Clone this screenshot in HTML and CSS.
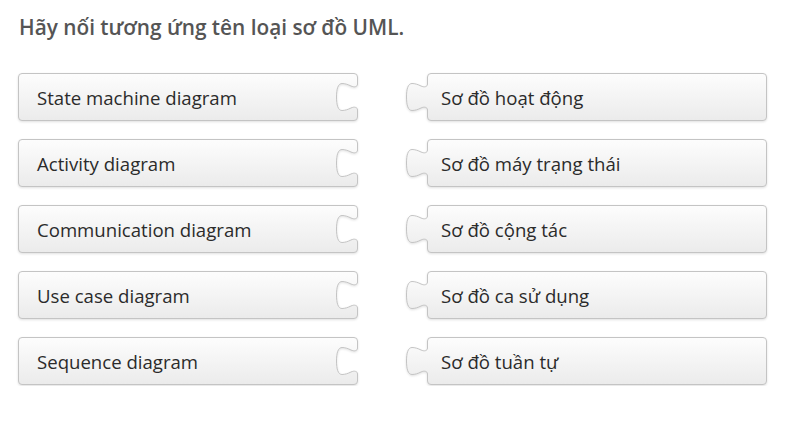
FILE: index.html
```html
<!DOCTYPE html>
<html lang="vi">
<head>
<meta charset="utf-8">
<title>Hãy nối tương ứng</title>
<link rel="stylesheet" href="styles.css">
</head>
<body>
<div class="page">
  <h1 class="question">Hãy nối tương ứng tên loại sơ đồ UML.</h1>
  <div class="board">
    <div class="col col-left">
      <div class="card card-left">
        <svg class="shape" viewBox="0 0 341 49" width="341" height="49"><use href="#sock"/></svg>
        <span class="label">State machine diagram</span>
      </div>
      <div class="card card-left">
        <svg class="shape" viewBox="0 0 341 49" width="341" height="49"><use href="#sock"/></svg>
        <span class="label">Activity diagram</span>
      </div>
      <div class="card card-left">
        <svg class="shape" viewBox="0 0 341 49" width="341" height="49"><use href="#sock"/></svg>
        <span class="label">Communication diagram</span>
      </div>
      <div class="card card-left">
        <svg class="shape" viewBox="0 0 341 49" width="341" height="49"><use href="#sock"/></svg>
        <span class="label">Use case diagram</span>
      </div>
      <div class="card card-left">
        <svg class="shape" viewBox="0 0 341 49" width="341" height="49"><use href="#sock"/></svg>
        <span class="label">Sequence diagram</span>
      </div>
    </div>
    <div class="col col-right">
      <div class="card card-right">
        <svg class="shape" viewBox="0 0 362 49" width="362" height="49"><use href="#tab"/></svg>
        <span class="label">Sơ đồ hoạt động</span>
      </div>
      <div class="card card-right">
        <svg class="shape" viewBox="0 0 362 49" width="362" height="49"><use href="#tab"/></svg>
        <span class="label">Sơ đồ máy trạng thái</span>
      </div>
      <div class="card card-right">
        <svg class="shape" viewBox="0 0 362 49" width="362" height="49"><use href="#tab"/></svg>
        <span class="label">Sơ đồ cộng tác</span>
      </div>
      <div class="card card-right">
        <svg class="shape" viewBox="0 0 362 49" width="362" height="49"><use href="#tab"/></svg>
        <span class="label">Sơ đồ ca sử dụng</span>
      </div>
      <div class="card card-right">
        <svg class="shape" viewBox="0 0 362 49" width="362" height="49"><use href="#tab"/></svg>
        <span class="label">Sơ đồ tuần tự</span>
      </div>
    </div>
  </div>
</div>
<svg class="defs" width="0" height="0" aria-hidden="true">
  <defs>
    <linearGradient id="g" x1="0" y1="0" x2="0" y2="1">
      <stop offset="0" stop-color="#fdfdfd"/>
      <stop offset="1" stop-color="#ebebeb"/>
    </linearGradient>
    <path id="sock" fill="url(#g)" stroke="#c4c4c4" stroke-width="1"
      d="M4,0.5 H336 Q339.5,0.5 339.5,4 V11
         C339.5,14 336,14.5 333,13
         C330,11.5 327,10.5 324,10.5
         C320,10.5 318.5,16 318.5,24
         C318.5,32 320,37.5 324,37.5
         C327,37.5 330,36.5 333,35
         C336,33.5 339.5,34 339.5,37
         V44 Q339.5,47.5 336,47.5 H4 Q0.5,47.5 0.5,44 V4 Q0.5,0.5 4,0.5 Z"/>
    <path id="tab" fill="url(#g)" stroke="#c4c4c4" stroke-width="1"
      d="M25,0.5 H357 Q360.5,0.5 360.5,4 V44 Q360.5,47.5 357,47.5 H25 Q21.5,47.5 21.5,44 V37
         C21.5,34 18,33.5 15,35
         C12,36.5 9,37.5 6,37.5
         C2,37.5 0.5,32 0.5,24
         C0.5,16 2,10.5 6,10.5
         C9,10.5 12,11.5 15,13
         C18,14.5 21.5,14 21.5,11
         V4 Q21.5,0.5 25,0.5 Z"/>
  </defs>
</svg>
</body>
</html>
```
FILE: styles.css
```css
html, body {
  margin: 0;
  padding: 0;
  background: #ffffff;
}
body {
  font-family: "Open Sans", "Noto Sans", "Liberation Sans", sans-serif;
  color: #2b2b2b;
}
.page {
  padding: 13px 0 0 18px;
}
.question {
  margin: 0 0 0 1px;
  font-size: 20.8px;
  font-weight: 600;
  line-height: 28px;
  color: #555555;
}
.board {
  display: flex;
  gap: 47px;
  margin-top: 32px;
}
.col {
  display: flex;
  flex-direction: column;
  gap: 17px;
}
.card {
  position: relative;
  height: 49px;
  display: flex;
  align-items: center;
}
.card-left {
  width: 341px;
}
.card-right {
  width: 362px;
}
.shape {
  position: absolute;
  left: 0;
  top: 0;
  filter: drop-shadow(0 1px 1px rgba(0, 0, 0, 0.12));
}
.label {
  position: relative;
  font-size: 18.6px;
  line-height: 24px;
  color: #2b2b2b;
  white-space: nowrap;
}
.card-left .label {
  padding-left: 19px;
}
.card-right .label {
  padding-left: 35px;
}
.defs {
  position: absolute;
  width: 0;
  height: 0;
}
```
